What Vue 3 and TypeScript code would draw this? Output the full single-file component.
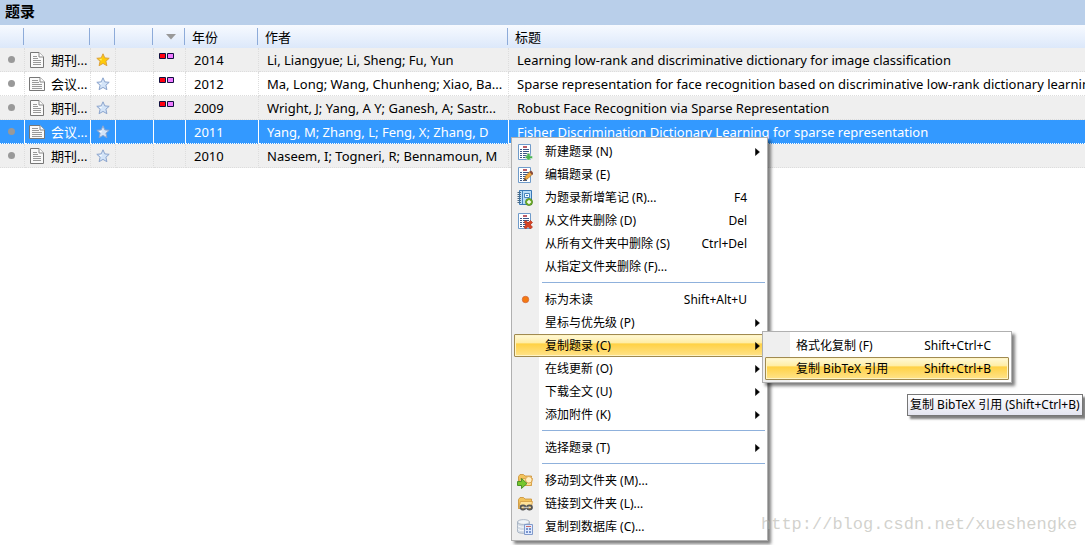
<script setup lang="ts">
interface Reference {
  kind: string
  starred: boolean
  tagged: boolean
  year: string
  authors: string
  title: string
  selected?: boolean
}

interface MenuEntry {
  label: string
  shortcut?: string
  icon?: string
  submenu?: boolean
  active?: boolean
}

const references: Reference[] = [
  { kind: '期刊...', starred: true, tagged: true, year: '2014', authors: 'Li, Liangyue; Li, Sheng; Fu, Yun', title: 'Learning low-rank and discriminative dictionary for image classification' },
  { kind: '会议...', starred: false, tagged: true, year: '2012', authors: 'Ma, Long; Wang, Chunheng; Xiao, Ba...', title: 'Sparse representation for face recognition based on discriminative low-rank dictionary learning' },
  { kind: '期刊...', starred: false, tagged: true, year: '2009', authors: 'Wright, J; Yang, A Y; Ganesh, A; Sastr...', title: 'Robust Face Recognition via Sparse Representation' },
  { kind: '会议...', starred: false, tagged: false, year: '2011', authors: 'Yang, M; Zhang, L; Feng, X; Zhang, D', title: 'Fisher Discrimination Dictionary Learning for sparse representation', selected: true },
  { kind: '期刊...', starred: false, tagged: false, year: '2010', authors: 'Naseem, I; Togneri, R; Bennamoun, M', title: '' },
]

const menuGroups: MenuEntry[][] = [
  [
    { label: '新建题录 (N)', icon: 'new', submenu: true },
    { label: '编辑题录 (E)', icon: 'edit' },
    { label: '为题录新增笔记 (R)...', icon: 'note', shortcut: 'F4' },
    { label: '从文件夹删除 (D)', icon: 'remove', shortcut: 'Del' },
    { label: '从所有文件夹中删除 (S)', shortcut: 'Ctrl+Del' },
    { label: '从指定文件夹删除 (F)...' },
  ],
  [
    { label: '标为未读', icon: 'unread', shortcut: 'Shift+Alt+U' },
    { label: '星标与优先级 (P)', submenu: true },
    { label: '复制题录 (C)', submenu: true, active: true },
    { label: '在线更新 (O)', submenu: true },
    { label: '下载全文 (U)', submenu: true },
    { label: '添加附件 (K)', submenu: true },
  ],
  [{ label: '选择题录 (T)', submenu: true }],
  [
    { label: '移动到文件夹 (M)...', icon: 'move' },
    { label: '链接到文件夹 (L)...', icon: 'link' },
    { label: '复制到数据库 (C)...', icon: 'database' },
  ],
]

const copyMenu: MenuEntry[] = [
  { label: '格式化复制 (F)', shortcut: 'Shift+Ctrl+C' },
  { label: '复制 BibTeX 引用', shortcut: 'Shift+Ctrl+B', active: true },
]
</script>

<template>
  <main class="library">
    <h1 class="heading">题录</h1>
    <table class="grid">
      <colgroup>
        <col class="c-read"><col class="c-kind"><col class="c-star"><col class="c-file"><col class="c-tag"><col class="c-year"><col class="c-author"><col>
      </colgroup>
      <thead>
        <tr>
          <th></th><th></th><th></th><th></th>
          <th class="sorted"><svg width="10" height="6" viewBox="0 0 10 6"><path d="M0 0H10L5 5.5Z" fill="#999" /></svg></th>
          <th>年份</th><th>作者</th><th>标题</th>
        </tr>
      </thead>
      <tbody>
        <tr v-for="item in references" :key="item.year" :class="{ selected: item.selected }">
          <td class="read"><span class="dot"></span></td>
          <td class="kind">
            <div class="kind-inner">
              <svg v-if="item.kind.startsWith('期')" width="16" height="16" viewBox="0 0 16 16">
                <path d="M1.5.5H10L14.5 5V15.5H1.5Z" fill="#fafafa" stroke="#777" />
                <path d="M10 .5V5H14.5" fill="#fff" stroke="#888" />
                <path d="M4 4.5H8M4 6.5H9M4 8.5H12M4 10.5H12M4 12.5H12" stroke="#999" />
              </svg>
              <svg v-else width="16" height="16" viewBox="0 0 16 16">
                <path d="M.5 1.5H11L15.5 6V14.5H.5Z" fill="#fafafa" stroke="#777" />
                <path d="M11 1.5V6H15.5" fill="#fff" stroke="#888" />
                <path d="M3 4.5H9M3 6.5H10M3 8.5H13M3 10.5H13M3 12.5H13" stroke="#999" />
              </svg>
              <span>{{ item.kind }}</span>
            </div>
          </td>
          <td class="star">
            <svg width="14" height="14" viewBox="0 0 14 14">
              <path
                d="M7 .8L8.8 4.9L13.2 5.3L9.9 8.2L10.9 12.7L7 10.4L3.1 12.7L4.1 8.2L.8 5.3L5.2 4.9Z"
                :fill="item.starred ? '#ffcb08' : '#d3e4f8'"
                :stroke="item.starred ? '#dda23b' : '#8ba4cd'"
              />
              <path d="M7 3L5.8 5.8L3 6.1L5.2 7.8Z" :fill="item.starred ? '#fff06a' : '#f7fbff'" />
            </svg>
          </td>
          <td></td>
          <td class="tag">
            <svg v-if="item.tagged" width="15" height="6" viewBox="0 0 15 6">
              <path d="M.5.5H6.5V5.5H.5Z" fill="#ff0010" stroke="#101040" />
              <path d="M8.5.5H14.5V5.5H8.5Z" fill="#ef79ff" stroke="#101040" />
            </svg>
          </td>
          <td>{{ item.year }}</td>
          <td>{{ item.authors }}</td>
          <td>{{ item.title }}</td>
        </tr>
      </tbody>
    </table>

    <div class="menu context" role="menu">
      <div v-for="(group, index) in menuGroups" :key="index" class="group">
        <button v-for="entry in group" :key="entry.label" type="button" role="menuitem" class="entry" :class="{ active: entry.active }">
          <span class="icon">
            <svg v-if="entry.icon" width="16" height="16" viewBox="0 0 16 16">
              <template v-if="entry.icon === 'new' || entry.icon === 'edit' || entry.icon === 'remove'">
                <path d="M1.5.5H13.5V15.5H1.5Z" fill="#fff" stroke="#6f9bca" />
                <path d="M6 3H10" stroke="#a01828" stroke-width="1.4" />
                <path d="M3 5.5H5M6 5.5H12M3 7.5H5M6 7.5H12M3 9.5H5M6 9.5H12M3 11.5H5M6 11.5H10M3 13.5H5M6 13.5H10" stroke="#3b5685" />
              </template>
              <path v-if="entry.icon === 'new'" d="M10 9.5H13V12H15.5V14.5H13V16H10V14.5H8.5V12H10Z" fill="#4bb353" stroke="#eaf6ea" stroke-width=".5" />
              <g v-if="entry.icon === 'edit'">
                <path d="M7 13.5L8.5 9L13 4.5L15.5 7L11 11.5Z" fill="#f3aa3f" stroke="#a5672b" stroke-width=".7" />
                <path d="M12.5 5L14 3.5L16 5.5V7L15 8Z" fill="#8b4b37" />
                <path d="M7 13.5L7.8 11L9.5 12.5Z" fill="#574638" />
              </g>
              <path v-if="entry.icon === 'remove'" d="M7 9L9 7.5L11 9.8L13.5 7.5L15.5 9.5L13.3 11.8L15.5 14L13.5 16L11 13.8L8.5 16L7 14L9 11.8Z" fill="#d84323" stroke="#a92b18" stroke-width=".6" />
              <g v-if="entry.icon === 'note'">
                <path d="M2.5.5H14.5V14.5H2.5Z" fill="#b9dcf7" stroke="#3979b7" />
                <path d="M5.5 1V14" stroke="#4785bd" />
                <path d="M.5 2.5H4M.5 4.5H4M.5 6.5H4M.5 8.5H4M.5 10.5H4M.5 12.5H4" stroke="#496985" />
                <path d="M7.5 3.5H12.5V7.5H7.5Z" fill="#f4faff" stroke="#4785bd" />
                <path d="M9 5.5H11" stroke="#4785bd" />
                <circle cx="12" cy="12" r="3.5" fill="#78b52c" stroke="#478322" stroke-width=".8" />
                <path d="M12 10V14M10 12H14" stroke="#fff" stroke-width="1.4" />
              </g>
              <circle v-if="entry.icon === 'unread'" cx="8.5" cy="7.5" r="3.2" fill="#f57a10" stroke="#d26439" stroke-width=".8" />
              <g v-if="entry.icon === 'move' || entry.icon === 'link'">
                <path d="M1.5 3.5L3 1.5H6.5L8 3H14.5V12.5H1.5Z" fill="#f2c35c" stroke="#c98f34" stroke-width=".8" />
                <path d="M1.5 12.5L3.5 5.5H15.5L14 12.5Z" fill="#ffe29a" stroke="#d49b3d" stroke-width=".8" />
              </g>
              <g v-if="entry.icon === 'move'">
                <circle cx="11.8" cy="6.8" r="3.3" fill="#fff0c4" stroke="#dda554" />
                <path d="M.5 8.5H4.5V5.5L10 10.5L4.5 15.5V12.5H.5Z" fill="#77c72c" stroke="#438b22" stroke-width=".9" />
              </g>
              <g v-if="entry.icon === 'link'" fill="none">
                <rect x="3.5" y="9.5" width="5" height="4" rx="2" stroke="#555" stroke-width="1.8" />
                <rect x="10" y="9.5" width="5" height="4" rx="2" stroke="#555" stroke-width="1.8" />
                <path d="M6.5 11.5H12" stroke="#bbb" stroke-width="1.3" />
              </g>
              <g v-if="entry.icon === 'database'">
                <path d="M.5 3V12.5C.5 15 12.5 15 12.5 12.5V3Z" fill="#d2dbe6" stroke="#9da9bb" stroke-width=".8" />
                <ellipse cx="6.5" cy="3" rx="6" ry="2.4" fill="#f0f4f8" stroke="#9da9bb" stroke-width=".8" />
                <path d="M.8 6.5C2 8.7 11 8.7 12.2 6.5M.8 10C2 12.2 11 12.2 12.2 10" fill="none" stroke="#fff" />
                <path d="M7.5 5.5H15.5V15.5H7.5Z" fill="#dfeaff" stroke="#829bcb" />
                <path d="M9 7.5H14" stroke="#c96969" />
                <path d="M9 10H11M12 10H14M9 13H11M12 13H14" stroke="#5778bd" stroke-width="1.4" />
              </g>
            </svg>
          </span>
          <span class="label">{{ entry.label }}</span>
          <span v-if="entry.shortcut" class="shortcut">{{ entry.shortcut }}</span>
          <svg v-if="entry.submenu" class="arrow" width="5" height="8" viewBox="0 0 5 8"><path d="M.5 .5L4.5 4L.5 7.5Z" fill="#000" stroke="#000" stroke-width=".5" /></svg>
        </button>
      </div>
    </div>

    <div class="menu copy" role="menu">
      <button v-for="entry in copyMenu" :key="entry.label" type="button" role="menuitem" class="entry" :class="{ active: entry.active }">
        <span class="icon"></span>
        <span class="label">{{ entry.label }}</span>
        <span class="shortcut">{{ entry.shortcut }}</span>
      </button>
    </div>

    <div class="tooltip" role="tooltip">复制 BibTeX 引用 (Shift+Ctrl+B)</div>
    <div class="watermark">http://blog.csdn.net/xueshengke</div>
  </main>
</template>

<style>
body {
  margin: 0;
  background: #fff;
}
</style>

<style scoped>
.library {
  position: relative;
  min-height: 100vh;
  overflow: hidden;
  color: #000;
  font: 13px/20px "Noto Sans", "Noto Sans CJK SC", sans-serif;
}

.heading {
  box-sizing: border-box;
  height: 25px;
  margin: 0;
  padding: 1px 5px;
  background: #b9cfea;
  font-size: 15px;
  line-height: 20px;
}

.grid {
  width: 100%;
  table-layout: fixed;
  border-collapse: separate;
  border-spacing: 0;
}

.c-read { width: 25px; }
.c-kind { width: 66px; }
.c-star { width: 25px; }
.c-file { width: 38px; }
.c-tag { width: 32px; }
.c-year { width: 73px; }
.c-author { width: 250px; }

th {
  height: 23px;
  padding: 0 6px;
  text-align: left;
  font-weight: 400;
  line-height: 20px;
  background:
    linear-gradient(#8dabd9, #8dabd9) right 1px top 3px / 1px 17px no-repeat,
    linear-gradient(#f7faff, #dce8fa);
}

th:last-child {
  background: linear-gradient(#f7faff, #dce8fa);
}

th.sorted {
  padding: 0 0 0 12px;
}

th svg {
  display: block;
}

td {
  box-sizing: border-box;
  height: 24px;
  padding: 0 0 0 8px;
  overflow: hidden;
  white-space: nowrap;
  border-right: 1px dotted #ddd;
  border-bottom: 1px dotted #ddd;
}

td:last-child {
  border-right: 0;
}

tbody tr:nth-child(odd) {
  background: #efefef;
}

tbody tr.selected {
  color: #fff;
  background: #3399ff;
}

.selected td {
  border-right-style: solid;
  border-color: #fff;
}

td.read {
  padding: 0 0 0 8px;
}

.dot {
  display: block;
  width: 7px;
  height: 7px;
  border-radius: 50%;
  background: #999;
}

td.kind {
  padding: 0 0 0 4px;
}

.kind-inner {
  display: flex;
  align-items: center;
  gap: 6px;
}

.kind-inner svg {
  flex: none;
}

td.star {
  padding: 0 0 0 5px;
}

td svg {
  display: block;
}

td.tag {
  padding: 5px 0 0 5px;
  vertical-align: top;
}

.menu {
  position: absolute;
  box-sizing: border-box;
  padding: 2px;
  border: 1px solid #b0b0b0;
  background: linear-gradient(90deg, #efefef 27px, #fff 27px);
  box-shadow: 3px 3px 3px rgba(0, 0, 0, 0.5);
  font-size: 12px;
}

.context {
  top: 137px;
  left: 511px;
  width: 257px;
}

.copy {
  top: 331px;
  left: 762px;
  width: 250px;
}

.group + .group::before {
  content: "";
  display: block;
  height: 1px;
  margin: 4px 0 5px 28px;
  background: #8fb1dc;
}

.entry {
  display: flex;
  align-items: center;
  box-sizing: border-box;
  width: 100%;
  height: 23px;
  margin: 0;
  padding: 0 4px 0 2px;
  border: 1px solid transparent;
  border-radius: 1px;
  background: transparent;
  color: inherit;
  font: inherit;
  text-align: left;
  white-space: nowrap;
}

.entry.active {
  border-color: #a08a50;
  background: linear-gradient(#fff9d9, #ffeda3 38%, #ffd144 42%, #ffe38a);
  box-shadow: inset 0 0 0 1px #fff4c4;
}

.icon {
  flex: none;
  width: 28px;
  height: 16px;
}

.icon svg {
  display: block;
}

.label {
  flex: 1;
}

.shortcut {
  margin-right: 13px;
}

.arrow {
  flex: none;
}

.tooltip {
  position: absolute;
  top: 394px;
  left: 907px;
  padding: 0 2px;
  border: 1px solid #767676;
  background: linear-gradient(#fff, #e4e5f0);
  box-shadow: 3px 3px 2px rgba(0, 0, 0, 0.5);
  font-size: 12px;
  white-space: nowrap;
}

.watermark {
  position: absolute;
  top: 515px;
  left: 761px;
  color: rgba(180, 180, 172, 0.6);
  font: 17px/20px "Liberation Mono", monospace;
}
</style>
